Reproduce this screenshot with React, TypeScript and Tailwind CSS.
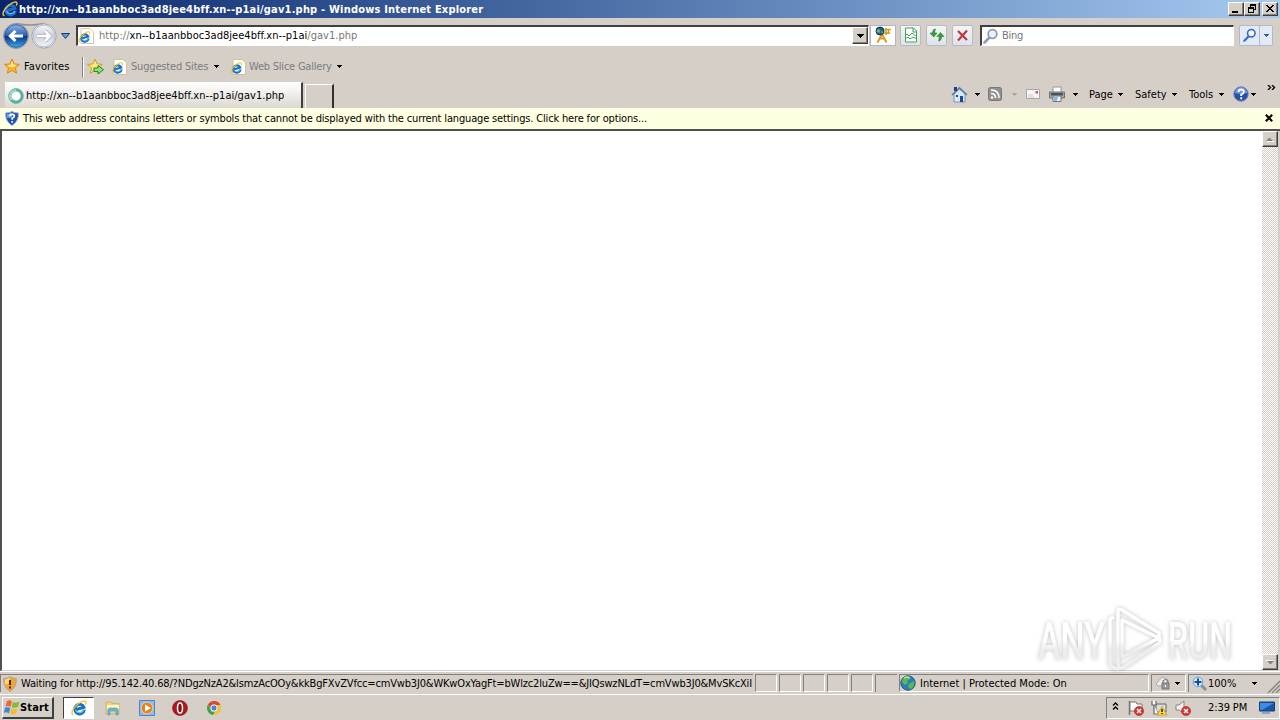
import type { ReactNode } from 'react';

function IeIcon({ size = 16, page = false }: { size?: number; page?: boolean }) {
  return (
    <svg width={size} height={size} viewBox="0 0 16 16" className="shrink-0">
      {page && <path d="M3 .5h9l3.500 3.500v11.500H3z" fill="#fff" stroke="#c9b98e" strokeWidth=".8" />}
      <g transform={page ? 'translate(.3 3) scale(.76)' : undefined}>
        <g transform="rotate(-16 8 8)">
          <path d="M12.700 11A4.800 4.800 0 1 1 13 8.700H5" fill="none" stroke="#1a6fc4" strokeWidth="2.900" />
          <path d="M12 11.200A4.600 4.600 0 0 1 4 9" fill="none" stroke="#5cc4f4" strokeWidth="1.200" />
        </g>
        <path d="M2.500 14.800C-1 14 2 8 7 4c4-3.300 8-4 8-1.600 0 .8-.4 1.600-.8 2.200" fill="none" stroke="#f3c62f" strokeWidth="1.400" />
      </g>
    </svg>
  );
}

function BackIcon() {
  return (
    <svg width="58" height="28" viewBox="0 0 58 28" className="mt-[1px] shrink-0">
      <defs>
        <linearGradient id="back" x1="0" y1="0" x2="0" y2="1">
          <stop offset="0" stopColor="#8eb6e8" />
          <stop offset=".48" stopColor="#2a60b4" />
          <stop offset=".52" stopColor="#0a3486" />
          <stop offset="1" stopColor="#3baaf2" />
        </linearGradient>
        <linearGradient id="fwd" x1="0" y1="0" x2="0" y2="1">
          <stop offset="0" stopColor="#f5f6f9" />
          <stop offset=".5" stopColor="#c9cfdb" />
          <stop offset="1" stopColor="#f3f6fa" />
        </linearGradient>
      </defs>
      <path d="M14 1.500q14 3 28 0" fill="none" stroke="#8f8f98" strokeWidth="1.500" />
      <circle cx="14" cy="14" r="12.500" fill="#e8ecf2" stroke="#8790a4" />
      <circle cx="14" cy="14" r="11.400" fill="url(#back)" stroke="#183e7d" strokeWidth=".8" />
      <path d="M21 14H9M13.500 9L8.300 14l5.200 5" fill="none" stroke="#fff" strokeWidth="3" />
      <circle cx="42" cy="14" r="12.200" fill="#eef0f4" stroke="#a0a4ae" />
      <circle cx="42" cy="14" r="10.800" fill="url(#fwd)" stroke="#b8bdc9" />
      <path d="M35 14h12M43 9l5 5-5 5" fill="none" stroke="#a4abb9" strokeWidth="4" />
      <path d="M35 14h12M43 9l5 5-5 5" fill="none" stroke="#fff" strokeWidth="2.600" />
    </svg>
  );
}

function Star({ add = false }: { add?: boolean }) {
  return (
    <svg width="17" height="17" viewBox="0 0 17 17" className="shrink-0">
      <path d="M8 1l2.100 4.900 5.300.5-4 3.500 1.200 5.300L8 12.500l-4.700 2.700 1.200-5.300-4-3.500 5.400-.5z" fill={add ? '#f8df6d' : '#fcb42b'} stroke={add ? '#c99a18' : '#d58314'} strokeWidth=".9" />
      <path d="M8 3l1.400 3.600 3.400.4-3 2H5.500L3 7.200 6.500 7z" fill="#ffe68c" />
      {add && <path d="M7 10h4V7.500l5.500 4.200L11 16v-2.500H7z" fill="#8fe07c" stroke="#208a24" />}
    </svg>
  );
}

function Caret({ color = '#000', className = '' }: { color?: string; className?: string }) {
  return (
    <svg width="5" height="3" viewBox="0 0 5 3" shapeRendering="crispEdges" className={`shrink-0 ${className}`}>
      <path d="M0 0h5v1H4v1H3v1H2V2H1V1H0z" fill={color} />
    </svg>
  );
}

function Magnifier({ color, size = 16 }: { color: string; size?: number }) {
  return (
    <svg width={size} height={size} viewBox="0 0 16 16" className="shrink-0">
      <path d="M6.500 9.500L1.500 14.500" stroke={color} strokeWidth="2.500" strokeLinecap="round" />
      <circle cx="9.500" cy="6" r="4.300" fill="#edf4ff" stroke={color} strokeWidth="1.800" />
    </svg>
  );
}

function HelpIcon() {
  return (
    <svg width="16" height="16" viewBox="0 0 16 16" className="shrink-0">
      <circle cx="8" cy="8" r="7.200" fill="#2451ae" stroke="#7184ae" />
      <path d="M2 7a6 6 0 0 1 12 0q-6 2-12 0" fill="#6c94e2" />
      <path d="M5.500 6q0-2.500 2.700-2.500T10.800 6Q10.500 7.300 8.200 8.500V10M8.200 11.200v2" fill="none" stroke="#fff" strokeWidth="1.900" />
    </svg>
  );
}

function ShieldHelp() {
  return (
    <svg width="14" height="15" viewBox="0 0 14 15" className="shrink-0">
      <path d="M7 .5Q9 2 13.300 2 14 10 7 14.500 0 10 .7 2 5 2 7 .5z" fill="#1d4fae" stroke="#8ea5cf" />
      <path d="M7 1.500Q4 3 1.700 3v4H7z" fill="#6c9be4" />
      <path d="M4.800 5.200q0-1.900 2.300-1.900t2.300 1.900Q9.200 6.500 7.200 7.500v1.200M7.200 10v1.800" fill="none" stroke="#fff" strokeWidth="1.700" />
    </svg>
  );
}

function WindowButton({ children }: { children: ReactNode }) {
  return (
    <div className="flex h-[14px] w-4 items-center justify-center border border-t-white border-r-[#404040] border-b-[#404040] border-l-white bg-[#d5cfc8] shadow-[inset_-1px_-1px_0_#808080]">
      <svg width="12" height="10" viewBox="0 0 12 10" shapeRendering="crispEdges">{children}</svg>
    </div>
  );
}

function TitleBar() {
  return (
    <div className="flex h-[18px] items-center bg-linear-to-r from-[#0a246a] to-[#a6caf0] pr-[2px] pl-[2px]">
      <IeIcon />
      <span className="mt-[1px] ml-[1px] flex-1 text-[11px] font-bold tracking-[0.19px] text-white">
        http://xn--b1aanbboc3ad8jee4bff.xn--p1ai/gav1.php - Windows Internet Explorer
      </span>
      <WindowButton><path d="M2 7h6v2H2z" /></WindowButton>
      <WindowButton><path d="M4 0h6v2H4zM4 2h1v1H4zM9 2h1v4H8V5h1zM2 3h6v2H2zM2 5h1v4H2zM7 5h1v4H7zM3 8h4v1H3z" /></WindowButton>
      <div className="ml-[2px]">
        <WindowButton><path d="M2 1h2v1h1v1h2V2h1V1h2v1H9v1H8v1H7v1h1v1h1v1h1v1H8V7H7V6H5v1H4v1H2V7h1V6h1V5h1V4H4V3H3V2H2z" /></WindowButton>
      </div>
    </div>
  );
}

function NavButton({ children }: { children: ReactNode }) {
  return (
    <div className="flex h-[21px] w-[21px] items-center justify-center rounded-[2px] border border-[#b5bac5] bg-linear-to-b from-[#f4f5f7] to-[#dfe3ea]">
      {children}
    </div>
  );
}

function AddressRow() {
  return (
    <div className="flex h-[34px] items-center pl-[2px]">
      <BackIcon />
      <svg width="9" height="6" viewBox="0 0 9 6" className="mt-[1px] ml-[1px] shrink-0"><path d="M.5.5h8l-4 5z" fill="#5ba1d3" stroke="#173c70" /></svg>
      <div className="ml-[6px] flex h-[21px] w-[793px] items-center border-t-2 border-r border-b border-l-2 border-t-[#404040] border-r-white border-b-white border-l-[#404040] bg-white">
        <IeIcon page />
        <span className="mt-[1px] ml-[5px] flex-1 text-[11px] tracking-[0.03px] text-[#777]">
          http://<span className="text-black">xn--b1aanbboc3ad8jee4bff.xn--p1ai</span>/gav1.php
        </span>
        <div className="flex h-[17px] w-4 items-center justify-center border border-t-white border-r-[#404040] border-b-[#404040] border-l-white bg-[#d5cfc8] shadow-[inset_-1px_-1px_0_#808080]">
          <svg width="7" height="4" viewBox="0 0 7 4" shapeRendering="crispEdges"><path d="M0 0h7v1H6v1H5v1H4v1H3V3H2V2H1V1H0z" /></svg>
        </div>
      </div>
      <div className="ml-[1px] flex h-[21px] w-[26px] items-center justify-center border border-[#a9b8cf] bg-white">
        <svg width="18" height="18" viewBox="0 0 18 18">
          <path d="M10.500 3.500h6.500M10 7h6M12 2v7M14.500 3v5" fill="none" stroke="#dc971c" strokeWidth="1.500" />
          <path d="M8 8l-4.500 8.500M8 8l4.500 8.500M5 12.500h6" fill="none" stroke="#dc971c" strokeWidth="1.900" />
          <circle cx="6" cy="5" r="4" fill="#205e94" stroke="#153850" />
          <path d="M3.500 3l3 1-1 3-3-1zM7.500 4.500l2 2-2 1z" fill="#74b46e" />
        </svg>
      </div>
      <div className="ml-[4px] flex gap-[5px]">
        <NavButton>
          <svg width="14" height="16" viewBox="0 0 14 16">
            <path d="M1.500 1h8l3 3v11h-11z" fill="#fff" stroke="#41a15a" />
            <path d="M9 1v4h4M1 9l2-2 2 2 3-3 5 4M1 12l3-2 2 2 3-2 4 2" fill="none" stroke="#41a15a" />
          </svg>
        </NavButton>
        <NavButton>
          <svg width="16" height="14" viewBox="0 0 16 14" fill="#36a13b" stroke="#167423" strokeWidth=".5">
            <path d="M6.500 1Q3.500 1 3.500 5H1l3.700 4L8 5H5.700Q5.500 3 6.500 1zM9.500 13q3 0 3-4.500H15L11.500 4.500 8 8.500h2.300q0 2.500-.8 4.500z" />
          </svg>
        </NavButton>
        <NavButton>
          <svg width="13" height="13" viewBox="0 0 13 13"><path d="M2 2l9 9M11 1.500L2 11.500" stroke="#c8343e" strokeWidth="2.200" /></svg>
        </NavButton>
      </div>
      <div className="ml-[7px] flex h-[21px] w-[254px] items-center border-t-2 border-r border-b border-l-2 border-t-[#404040] border-r-white border-b-white border-l-[#404040] bg-white pl-[1px]">
        <Magnifier color="#8b9cb4" />
        <span className="mt-[1px] ml-[3px] text-[11px] tracking-[-0.3px] text-[#777]">Bing</span>
      </div>
      <div className="ml-[5px] flex h-[21px] w-[34px] items-center rounded-[2px] border border-[#afbace] bg-[#e4eaf5]">
        <div className="flex h-full w-[20px] items-center justify-center border-r border-[#afbace]"><Magnifier color="#3769cb" size={14} /></div>
        <Caret color="#1c64a8" className="ml-[4px]" />
      </div>
    </div>
  );
}

function FavoritesBar() {
  return (
    <div className="flex h-[28px] items-center pt-[1px] pl-[4px] text-[11px] text-[#7c7c7c]">
      <Star />
      <span className="ml-[3px] w-[58px] tracking-[0.1px] text-black">Favorites</span>
      <div className="h-[20px] w-[2px] border-l border-l-[#808080] bg-white" />
      <div className="ml-[3px]"><Star add /></div>
      <div className="ml-[7px] flex items-center">
        <IeIcon page />
        <span className="mt-[1px] ml-[4px] w-[83px] whitespace-nowrap tracking-[-0.18px]">Suggested Sites</span>
        <Caret />
      </div>
      <div className="ml-[11px] flex items-center">
        <IeIcon page />
        <span className="mt-[1px] ml-[3px] w-[88px] whitespace-nowrap tracking-[-0.22px]">Web Slice Gallery</span>
        <Caret />
      </div>
    </div>
  );
}

function MenuItem({ label, className }: { label: string; className: string }) {
  return (
    <div className={`flex items-center ${className}`}>
      <span className="mt-[1px] flex-1">{label}</span>
      <Caret />
    </div>
  );
}

function CommandBar() {
  return (
    <div className="mt-[1px] flex h-[26px] items-center text-[11px]">
      <svg width="17" height="17" viewBox="0 0 17 17">
        <path d="M3 8v8h11V8L8.500 3z" fill="#d7e9fb" stroke="#7b94b6" />
        <path d="M1 9l7.500-7L16 9" fill="none" stroke="#607ba4" strokeWidth="1.700" />
        <path d="M3 1h3v4H3z" fill="#243e88" />
        <path d="M9 10h3v6H9z" fill="#174c94" />
        <path d="M5 9h2v2H5z" fill="#2d4b72" />
      </svg>
      <Caret className="ml-[7px]" />
      <svg width="14" height="14" viewBox="0 0 14 14" className="ml-[8px]">
        <rect x=".5" y=".5" width="13" height="13" rx="2" fill="#929292" stroke="#777" />
        <path d="M3 3q8 0 8 8M3 6.500q4.500 0 4.500 4.500" fill="none" stroke="#fff" strokeWidth="1.600" />
        <circle cx="4" cy="10.500" r="1.200" fill="#fff" />
      </svg>
      <Caret color="#aaa6a0" className="ml-[10px]" />
      <svg width="14" height="10" viewBox="0 0 14 10" className="ml-[9px]">
        <path d="M.5.500h13v9H.5z" fill="#f6f4f6" stroke="#aaa4a8" />
        <path d="M9.500 2h2.500v2.500H9.500z" fill="#cd5568" />
        <path d="M2 6h5M2 8h6" stroke="#d0cbd0" />
      </svg>
      <svg width="16" height="16" viewBox="0 0 16 16" className="ml-[9px]">
        <path d="M4 6V1h8v5" fill="#fff" stroke="#999" />
        <path d="M.5 6h15v6H.5z" fill="#a4a8ac" stroke="#6c7074" />
        <path d="M2 7h12v2.500H2z" fill="#4d5154" />
        <path d="M4 10h8v5.500H4z" fill="#e7f4ff" stroke="#777" />
        <path d="M5 12h4M5 14h3" stroke="#3180bd" />
      </svg>
      <Caret className="ml-[8px]" />
      <MenuItem label="Page" className="ml-[11px] w-[34px]" />
      <MenuItem label="Safety" className="ml-[12px] w-[42px]" />
      <MenuItem label="Tools" className="ml-[12px] w-[35px]" />
      <div className="ml-[9px]"><HelpIcon /></div>
      <Caret className="ml-[2px]" />
      <svg width="9" height="5" viewBox="0 0 9 5" className="mr-[4px] mb-[13px] ml-[11px]"><path d="M1 0l2.500 2.500L1 5M5 0l2.500 2.500L5 5" fill="none" stroke="#000" strokeWidth="1.400" /></svg>
    </div>
  );
}

function TabRow() {
  return (
    <div className="flex h-[28px] items-start justify-between">
      <div className="flex h-full items-end pl-[5px]">
        <div className="flex h-[26px] w-[298px] items-center border-t border-r-2 border-t-white border-r-[#404040] bg-linear-to-b from-white to-[#dcd8d1] pl-[3px] text-[11px]">
          <svg width="16" height="16" viewBox="0 0 16 16">
            <circle cx="8" cy="8" r="6" fill="#fff" stroke="#5fb3a3" strokeWidth="2.800" />
            <path d="M3.500 12A6 6 0 0 1 8 2" fill="none" stroke="#9be1cf" strokeWidth="2.200" />
            <circle cx="8" cy="8" r="7.300" fill="none" stroke="#5a9289" strokeWidth=".6" />
          </svg>
          <span className="mt-[1px] ml-[2px] whitespace-nowrap tracking-[0.03px]">http://xn--b1aanbboc3ad8jee4bff.xn--p1ai/gav1.php</span>
        </div>
        <div className="ml-[2px] h-[24px] w-[29px] border-t border-r-2 border-l border-t-white border-r-[#303030] border-l-white" />
      </div>
      <CommandBar />
    </div>
  );
}

function InfoBar() {
  return (
    <div className="flex h-[21px] items-center bg-[#ffffe1] pl-[5px] text-[11px]">
      <ShieldHelp />
      <span className="mt-[1px] ml-[4px] flex-1 tracking-[-0.16px]">
        This web address contains letters or symbols that cannot be displayed with the current language settings. Click here for options...
      </span>
      <svg width="8" height="8" viewBox="0 0 8 8" className="mr-[7px] mb-[1px]"><path d="M.8.8l6.400 6.400M7.200.8L.8 7.200" stroke="#000" strokeWidth="2" /></svg>
    </div>
  );
}

function ScrollButton({ down = false }: { down?: boolean }) {
  return (
    <div className="flex h-4 w-4 items-center justify-center border border-t-white border-r-[#404040] border-b-[#404040] border-l-white bg-[#d5cfc8] shadow-[inset_-1px_-1px_0_#808080]">
      <svg width="8" height="5" viewBox="0 0 8 5" className={down ? 'rotate-180' : ''}><path d="M0 4h7L3.500.5z" fill="#808080" /><path d="M1 4.500h7" stroke="#fff" /></svg>
    </div>
  );
}

function Watermark() {
  return (
    <svg width="204" height="66" viewBox="0 0 204 66" className="absolute right-[44px] bottom-[-3px] drop-shadow-[0_0_2px_rgba(0,0,0,0.25)]" fontFamily="Roboto" fontWeight="500">
      <defs>
        <linearGradient id="mark" x1="0" y1="0" x2="0" y2="66" gradientUnits="userSpaceOnUse">
          <stop offset=".5" stopColor="#fff" />
          <stop offset=".65" stopColor="#ececec" />
          <stop offset="1" stopColor="#f1f1f1" />
        </linearGradient>
      </defs>
      <g fill="url(#mark)" fontSize="52">
        <text x="6" y="52" textLength="67" lengthAdjust="spacingAndGlyphs">ANY</text>
        <text x="136" y="52" textLength="64" lengthAdjust="spacingAndGlyphs">RUN</text>
      </g>
      <g fill="none" stroke="url(#mark)" strokeWidth="3.500" strokeLinejoin="round">
        <path d="M86 57V4q0-3 4-1l37 23v5L90 13v37l37-19q2 4-1 6L92 60q-5 3-6-3" />
        <path d="M82 10l-4 2v45q1 4 9 5" />
      </g>
    </svg>
  );
}

function Viewport() {
  return (
    <div className="relative flex h-[542px] border-t-2 border-b border-l-2 border-t-[#505050] border-b-[#d5cfc8] border-l-[#505050] bg-white">
      <div className="flex-1" />
      <div className="flex w-4 flex-col justify-between bg-[repeating-conic-gradient(#fff_0_25%,#d5cfc8_0_50%)] bg-[size:2px_2px]">
        <ScrollButton />
        <ScrollButton down />
      </div>
      <div className="w-[2px] bg-[#d5cfc8]" />
      <Watermark />
    </div>
  );
}

const emptyPanes = [0, 1, 2, 3, 4];

function StatusBar() {
  return (
    <div className="flex h-[22px] items-center border-t border-white pt-[1px] text-[11px]">
      <div className="flex h-[18px] w-[753px] items-center overflow-hidden border-t border-l border-[#808080] pl-[2px]">
        <svg width="14" height="16" viewBox="0 0 14 16" className="shrink-0">
          <path d="M7 .5Q9 2.500 13.300 2.500 14 11 7 15.500 0 11 .7 2.500 5 2.500 7 .5z" fill="#f2a52e" stroke="#a9a6a0" />
          <path d="M7 1.500q-2 1.500-5 2v5l5-1z" fill="#ffd66f" />
          <path d="M7 4v5M7 10.500v2" stroke="#4b2b0a" strokeWidth="2" />
        </svg>
        <span className="ml-[4px] whitespace-nowrap tracking-[-0.16px]">
          Waiting for http://95.142.40.68/?NDgzNzA2&amp;lsmzAcOOy&amp;kkBgFXvZVfcc=cmVwb3J0&amp;WKwOxYagFt=bWlzc2luZw==&amp;JIQswzNLdT=cmVwb3J0&amp;MvSKcXiI
        </span>
      </div>
      <div className="ml-[2px] flex gap-[2px]">
        {emptyPanes.map((pane) => (
          <div key={pane} className="h-[18px] w-[22px] border border-t-[#808080] border-r-white border-b-white border-l-[#808080]" />
        ))}
        <div className="h-[18px] w-[22px] border-t border-l border-[#808080]" />
      </div>
      <div className="ml-[2px] flex h-[18px] w-[250px] items-center border border-t-[#808080] border-r-white border-b-white border-l-[#808080]">
        <svg width="16" height="16" viewBox="0 0 16 16">
          <circle cx="8" cy="8" r="7.200" fill="#2680c5" stroke="#29557d" />
          <path d="M3 3q3-3 6-2l1 3-3 2 1 2-3 2-3-3zM9 9l5-3q1 5-3 8l-3-2z" fill="#62b849" />
          <path d="M4 3q3-2 6 0" fill="none" stroke="#c5ecff" />
        </svg>
        <span className="mt-[1px] ml-[4px]">Internet | Protected Mode: On</span>
      </div>
      <div className="ml-[2px] flex h-[18px] w-[35px] items-center border border-t-[#808080] border-r-white border-b-white border-l-[#808080] pl-[3px]">
        <svg width="16" height="16" viewBox="0 0 16 16">
          <path d="M1 9l6-7 5 2v6L3 11z" fill="#ececec" stroke="#aaa" />
          <path d="M8 8V6q3-3 5 0v2" fill="none" stroke="#777" strokeWidth="1.200" />
          <path d="M7 8h7v6H7z" fill="#999" stroke="#777" />
          <path d="M10 10h1v2h-1z" fill="#fff" />
        </svg>
        <Caret className="ml-[4px]" />
      </div>
      <div className="ml-[2px] flex h-[18px] flex-1 items-center border-t border-l border-[#808080] pl-[3px]">
        <svg width="16" height="16" viewBox="0 0 16 16">
          <path d="M9 9l5 5" stroke="#858e9b" strokeWidth="3" />
          <circle cx="6" cy="6" r="4.800" fill="#d3ebff" stroke="#62a6dd" />
          <path d="M6 2.500v7M2.500 6h7" stroke="#194b9c" strokeWidth="2" />
        </svg>
        <span className="mt-[1px] w-[44px]">100%</span>
        <Caret />
        <svg width="13" height="13" viewBox="0 0 13 13" className="mt-[5px] ml-[10px]"><path d="M1 13L13 1M5 13l8-8M9 13l4-4" stroke="#808080" strokeWidth="1.300" /></svg>
      </div>
    </div>
  );
}

function Taskbar() {
  return (
    <div className="mt-[1px] flex h-[26px] items-center border-t border-white pl-[2px]">
      <div className="flex h-[22px] w-[52px] items-center border-t border-r-2 border-b-2 border-l border-t-white border-r-[#404040] border-b-[#404040] border-l-white pl-[1px]">
        <svg width="16" height="16" viewBox="0 0 16 16" className="shrink-0">
          <path d="M3 2q3-1.500 5 .5L6.500 8Q4.500 6.500 1.500 7.500z" fill="#ef6932" />
          <path d="M9 3q3 1.500 6.500-.5L14 8q-3 1.500-6.300.3z" fill="#83bd37" />
          <path d="M1.200 8.500q3-1 5 .8L4.800 14.500q-2-1.800-5-.8z" fill="#3a87d2" />
          <path d="M7.400 9.500q3 1.200 6.200 0l-1.500 5q-3 1.500-6.200-.2z" fill="#f5bd2e" />
        </svg>
        <span className="mt-[1px] text-[11px] font-bold tracking-[0.15px]">Start</span>
      </div>
      <div className="ml-[9px] flex h-[22px] w-[31px] items-center justify-center border border-t-[#404040] border-r-white border-b-white border-l-[#404040] bg-white"><IeIcon /></div>
      <svg width="16" height="16" viewBox="0 0 16 16" className="ml-[11px]">
        <path d="M1 4V2h5l1 1.500h7V14H1z" fill="#eed27b" stroke="#bba455" strokeWidth=".6" />
        <path d="M2 5h12v4H2z" fill="#fff5b8" />
        <path d="M3 15v-5q0-2 2-2h6q2 0 2 2v5h-2v-4H5v4z" fill="#64b7e2" stroke="#4489b6" strokeWidth=".5" />
      </svg>
      <svg width="16" height="16" viewBox="0 0 16 16" className="ml-[18px]">
        <path d="M.5.500h15v15H.5z" fill="#8abce8" stroke="#4f87bd" />
        <circle cx="8" cy="8" r="5.800" fill="#ef7e16" stroke="#fff" strokeWidth=".5" />
        <path d="M6 4.500v7l6-3.500z" fill="#fff" />
      </svg>
      <svg width="16" height="16" viewBox="0 0 16 16" className="ml-[17px]">
        <circle cx="8" cy="8" r="7.500" fill="#b31620" stroke="#7e1118" strokeWidth=".6" />
        <ellipse cx="8" cy="8" rx="2.500" ry="5" fill="#801014" stroke="#fff" strokeWidth="1.500" />
      </svg>
      <svg width="16" height="16" viewBox="0 0 16 16" className="ml-[18px]">
        <circle cx="8" cy="8" r="7" fill="#edc52e" />
        <path d="M2 4.500A7 7 0 0 1 14.500 5H8L5 9z" fill="#d84938" />
        <path d="M2 4.500L6 12l3-1-2 4A7 7 0 0 1 2 4.500" fill="#38a35b" />
        <circle cx="8" cy="8" r="3.200" fill="#4a82df" stroke="#fff" />
      </svg>
      <div className="ml-auto flex h-[22px] w-[174px] items-center border border-t-[#808080] border-r-white border-b-white border-l-[#808080] pl-[5px] text-[11px]">
        <svg width="7" height="9" viewBox="0 0 7 9" className="mb-[2px]"><path d="M1 3.500L3.500 1 6 3.500M1 7.500L3.500 5 6 7.500" fill="none" stroke="#000" strokeWidth="1.300" /></svg>
        <svg width="16" height="16" viewBox="0 0 16 16" className="ml-[9px]">
          <path d="M1.500 1v14" stroke="#777" strokeWidth="1.500" />
          <path d="M2 2h6l1 2h5v7H2z" fill="#fff" stroke="#777" />
          <ErrorBadge />
        </svg>
        <svg width="17" height="16" viewBox="0 0 17 16" className="ml-[7px]">
          <path d="M5 4h10v8H5z" fill="#dcdcdc" stroke="#666" />
          <path d="M1 1v4h4V1M3 5v9h4" fill="#fff" stroke="#666" strokeWidth="1.200" />
          <path d="M11 6.500L16 15H6z" fill="#ffdb22" stroke="#a98517" strokeWidth=".6" />
          <path d="M11 9v3M11 13v1" stroke="#000" strokeWidth="1.300" />
        </svg>
        <svg width="16" height="16" viewBox="0 0 16 16" className="ml-[7px]">
          <path d="M1 5h3l5-4v13l-5-4H1z" fill="#f4f4f4" stroke="#858585" />
          <ErrorBadge />
        </svg>
        <span className="ml-[17px] w-[51px] whitespace-nowrap tracking-[-0.1px]">2:39 PM</span>
        <svg width="16" height="14" viewBox="0 0 16 14">
          <path d="M.5 1h15v9H.5z" fill="#1656ac" stroke="#153d79" />
          <path d="M1 2h14L3 9H1z" fill="#3f8be0" />
          <path d="M3 12h8" stroke="#7696bb" strokeWidth="1.500" />
        </svg>
      </div>
    </div>
  );
}

function ErrorBadge() {
  return (
    <g>
      <circle cx="11" cy="11" r="4.600" fill="#df302c" stroke="#a62c29" strokeWidth=".6" />
      <path d="M9 9l4 4M13 9l-4 4" stroke="#fff" strokeWidth="1.500" />
    </g>
  );
}

export default function App() {
  return (
    <div className="flex h-[720px] w-[1280px] flex-col overflow-hidden bg-[#d5cfc8] font-['DejaVu_Sans_Condensed','DejaVu_Sans',sans-serif] leading-[14px] text-black">
      <TitleBar />
      <AddressRow />
      <FavoritesBar />
      <TabRow />
      <InfoBar />
      <Viewport />
      <StatusBar />
      <Taskbar />
    </div>
  );
}
